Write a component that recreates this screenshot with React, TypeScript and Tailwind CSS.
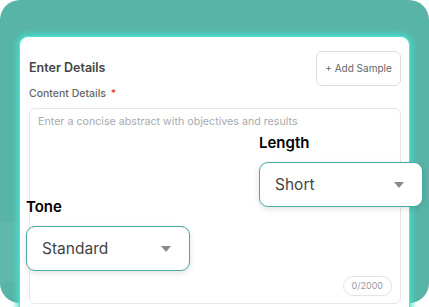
import React from "react";

function Caret() {
  return (
    <svg width="10" height="6" viewBox="0 0 10 6" className="shrink-0">
      <path d="M0 0 L10 0 L5 6 Z" fill="#8a8a8a" />
    </svg>
  );
}

function Select({ label, value, className }: { label: string; value: string; className: string }) {
  return (
    <div className={"absolute flex flex-col gap-[12px] " + className}>
      <div className="text-[15px] font-semibold text-black leading-none">{label}</div>
      <div className="w-[164px] h-[45px] rounded-[9px] border border-[#4aa9a0] bg-white shadow-[0_2px_6px_rgba(0,0,0,0.12)] flex items-center justify-between pl-[15px] pr-[18px]">
        <span className="text-[15.5px] text-[#444]">{value}</span>
        <Caret />
      </div>
    </div>
  );
}

export default function App() {
  return (
    <div className="relative w-[429px] h-[307px] overflow-hidden bg-white" style={{ fontFamily: "Inter, 'Noto Sans', sans-serif" }}>
      <div className="relative h-[303px] rounded-[20px] bg-[#58b4a7] pt-[36px] px-[19px]">
        <div className="absolute left-[-40px] top-[222px] w-[80px] h-[60px] rounded-full bg-white/5" />
        <div className="relative h-[290px] rounded-[9px] bg-white border border-[#4fe3d3] shadow-[0_0_6px_2px_#46dccb] pl-[9px] pr-[8px] pt-[14px] flex flex-col">
          <div className="flex items-start justify-between">
            <div className="pt-[8px] text-[12.5px] font-semibold text-[#444]">Enter Details</div>
            <div className="w-[85px] h-[35px] rounded-[6px] border border-[#dcdcdc] flex items-center justify-center text-[10px] text-[#666]">+ Add Sample</div>
          </div>
          <div className="text-[10.5px] leading-[15px] font-medium text-[#666]">
            Content Details <span className="text-[#e53935] ml-[2px]">*</span>
          </div>
          <div className="mt-[7px] h-[196px] rounded-[6px] border border-[#e6e6e6] pl-[8px] pr-[8px] pt-[5px] pb-[7px] flex flex-col justify-between items-start">
            <div className="text-[10.7px] text-[#a9a9b0]">Enter a concise abstract with objectives and results</div>
            <div className="self-end h-[20px] px-[8px] rounded-full border border-[#e4e4e4] flex items-center text-[9px] text-[#9a9a9a]">0/2000</div>
          </div>
        </div>
      </div>
      <Select label="Length" value="Short" className="left-[259px] top-[135px]" />
      <Select label="Tone" value="Standard" className="left-[26px] top-[199px]" />
    </div>
  );
}
